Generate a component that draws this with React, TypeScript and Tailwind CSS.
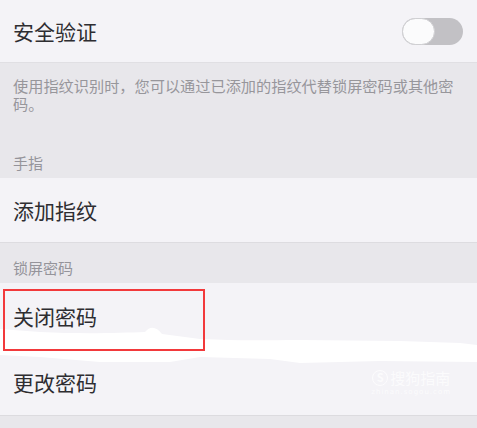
import React from 'react';

const font = { fontFamily: '"Noto Sans CJK SC", "Noto Sans", sans-serif' };

function Row({ label, children }: { label: string; children?: React.ReactNode }) {
  return (
    <div className="flex items-center justify-between bg-[#f4f3f7] pl-[13px] pr-[14px] h-full">
      <span className="text-[21px] text-[#2e2d31] leading-none">{label}</span>
      {children}
    </div>
  );
}

function Toggle() {
  return (
    <div className="relative w-[61px] h-[27px] rounded-full bg-[#c2c1c5]">
      <div className="absolute left-0 top-0 w-[33px] h-[27px] rounded-full bg-[#fbfbfc] border border-[#cfcfd2]" />
    </div>
  );
}

export default function App() {
  return (
    <div className="relative w-[477px] h-[428px] bg-[#e8e7eb] overflow-hidden" style={font}>
      <div className="h-[63px] border-b border-[#e0dfe3]">
        <Row label="安全验证">
          <Toggle />
        </Row>
      </div>

      <div className="h-[75px] pl-[13px] pr-[6px] pt-[13px] text-[15.2px] leading-[18px] text-[#97969b]">
        使用指纹识别时，您可以通过已添加的指纹代替锁屏密码或其他密码。
      </div>
      <div className="h-[40px] flex items-end px-[13px] pb-[5px] text-[15px] leading-[20px] text-[#95949a]">
        手指
      </div>

      <div className="h-[65px] border-b border-[#dddce0]">
        <Row label="添加指纹" />
      </div>

      <div className="h-[40px] flex items-end px-[13px] pb-[5px] text-[15px] leading-[20px] text-[#95949a]">
        锁屏密码
      </div>

      <div className="h-[67px] border-b border-[#dddce0]">
        <Row label="关闭密码" />
      </div>
      <div className="h-[66px] border-b border-[#dcdbdf]">
        <Row label="更改密码">
          <div className="flex flex-col items-center mr-[12px] text-white/70">
            <div className="flex items-center gap-[2px]">
              <span className="w-[16px] h-[16px] rounded-full border-[1.5px] border-white/70 flex items-center justify-center text-[11px] font-bold leading-none">S</span>
              <span className="text-[15px] leading-none">搜狗指南</span>
            </div>
            <span className="text-[7px] leading-none mt-[3px] tracking-[1px]" style={{ fontFamily: '"DejaVu Sans", sans-serif' }}>
              zhinan.sogou.com
            </span>
          </div>
        </Row>
      </div>

      {/* white smear over the rows */}
      <svg className="absolute left-0 top-[325px]" width="477" height="42" viewBox="0 0 477 42">
        <path
          d="M0 4 L40 7 C80 9 120 8 145 7 C150 1 156 1 162 9 L200 14 C240 16 270 15 300 15 L400 16 L460 18 L477 20 L477 37 L380 36 L300 38 L270 34 L200 32 L170 37 L100 37 L40 32 L0 30 Z"
          fill="#ffffff"
        />
      </svg>

      {/* red highlight box */}
      <div className="absolute left-[3px] top-[289px] w-[202px] h-[62px] border-2 border-[#f2393b]" />
    </div>
  );
}
